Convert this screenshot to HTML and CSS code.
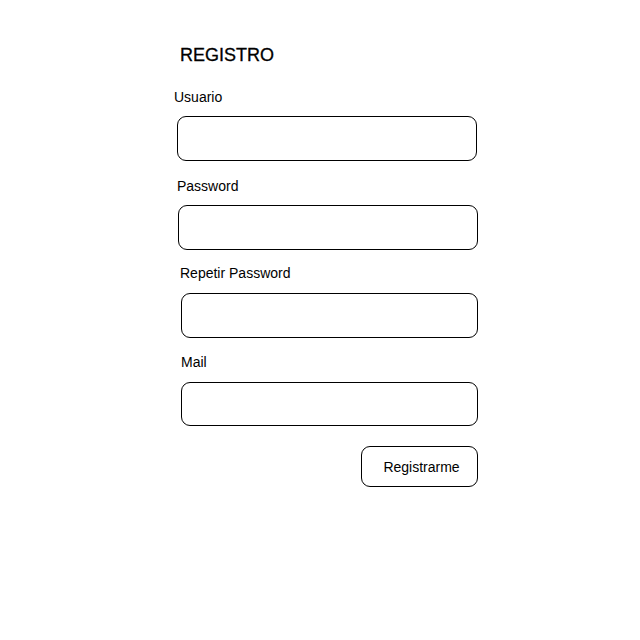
FILE: index.html
```html
<!DOCTYPE html>
<html lang="es">
<head>
<meta charset="utf-8">
<title>Registro</title>
<link rel="stylesheet" href="styles.css">
</head>
<body>
  <form class="register">
    <h1 class="register__title">REGISTRO</h1>

    <div class="field field--user">
      <label class="field__label" for="usuario">Usuario</label>
      <input class="field__input" id="usuario" type="text">
    </div>

    <div class="field field--pass">
      <label class="field__label" for="password">Password</label>
      <input class="field__input" id="password" type="password">
    </div>

    <div class="field field--repeat">
      <label class="field__label" for="password2">Repetir Password</label>
      <input class="field__input" id="password2" type="password">
    </div>

    <div class="field field--mail">
      <label class="field__label" for="mail">Mail</label>
      <input class="field__input" id="mail" type="email">
    </div>

    <div class="register__actions">
      <button class="register__button" type="button">Registrarme</button>
    </div>
  </form>
</body>
</html>
```

FILE: styles.css
```css
html, body {
  margin: 0;
  padding: 0;
  background: #ffffff;
}

body {
  font-family: "Liberation Sans", Arial, sans-serif;
  color: #000000;
}

.register {
  width: 302px;
  margin-left: 176px;
  padding-top: 45px;
  display: flex;
  flex-direction: column;
}

.register__title {
  margin: 0 0 23px 4px;
  font-size: 18px;
  font-weight: normal;
  line-height: 21px;
  -webkit-text-stroke: 0.3px #000000;
}

.field {
  display: flex;
  flex-direction: column;
  gap: 11px;
  margin-bottom: 17px;
}

.field__label {
  font-size: 14px;
  line-height: 16px;
}

.field__input {
  box-sizing: border-box;
  height: 45px;
  border: 1px solid #000000;
  border-radius: 9px;
  background: #ffffff;
  outline: none;
  padding: 0 10px;
  font: inherit;
}

.field--user .field__label { margin-left: -2px; }
.field--user .field__input { margin-left: 1px; width: 300px; }

.field--pass { margin-bottom: 15px; }
.field--pass .field__label { margin-left: 1px; }
.field--pass .field__input { margin-left: 2px; width: 300px; }

.field--repeat { gap: 12px; margin-bottom: 16px; }
.field--repeat .field__label { margin-left: 4px; }
.field--repeat .field__input { margin-left: 5px; width: 297px; }

.field--mail { gap: 12px; margin-bottom: 20px; }
.field--mail .field__label { margin-left: 5px; }
.field--mail .field__input { margin-left: 5px; width: 297px; height: 44px; }

.register__actions {
  display: flex;
  justify-content: flex-end;
}

.register__button {
  box-sizing: border-box;
  width: 117px;
  height: 41px;
  border: 1px solid #000000;
  border-radius: 9px;
  background: #ffffff;
  font-family: "Liberation Sans", Arial, sans-serif;
  font-size: 14px;
  color: #000000;
  padding: 0 0 0 4px;
}
```
